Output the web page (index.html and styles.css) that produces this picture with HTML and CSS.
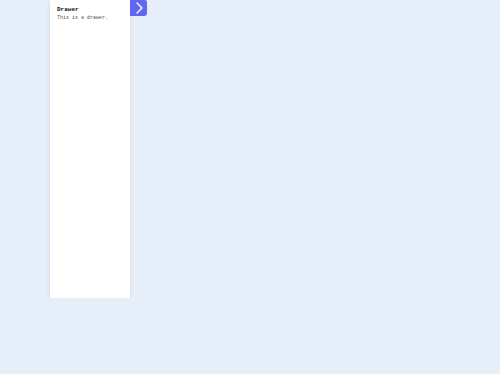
FILE: index.html
```html
<!DOCTYPE html>
<html lang="en">
<head>
    <meta charset="UTF-8">
    <meta name="viewport" content="width=device-width, initial-scale=1.0">
    <title>Drawer</title>
    <link rel="stylesheet" href="styles.css">
</head>
<body>
    <div class="layout">
        <aside class="drawer">
            <h2 class="drawer-title">Drawer</h2>
            <p class="drawer-text">This is a drawer.</p>
        </aside>
        <button class="toggle" type="button" aria-label="Toggle drawer">
            <svg width="12" height="14" viewBox="0 0 12 14">
                <path d="M4 2 L9 7 L4 12" fill="none" stroke="#fff" stroke-width="1.4" stroke-linecap="round" stroke-linejoin="round"/>
            </svg>
        </button>
    </div>
</body>
</html>
```

FILE: styles.css
```css
body {
    margin: 0;
    padding: 0;
    background-color: #e6eefa;
    font-family: "Liberation Mono", "DejaVu Sans Mono", monospace;
}

.layout {
    display: flex;
    align-items: flex-start;
    padding-left: 50px;
}

.drawer {
    width: 80px;
    height: 298px;
    box-sizing: border-box;
    padding: 6px 7px;
    background-color: #fff;
    box-shadow: 0 2px 4px rgba(0, 0, 0, 0.1);
}

.drawer-title {
    margin: 0 0 2px;
    font-size: 6px;
    font-weight: bold;
    color: #111;
}

.drawer-text {
    margin: 0;
    font-size: 5px;
    color: #555;
}

.toggle {
    width: 17px;
    height: 16px;
    padding: 0;
    border: none;
    border-radius: 0 2px 3px 0;
    background-color: #6366f1;
    display: flex;
    align-items: center;
    justify-content: center;
    cursor: pointer;
}
```
